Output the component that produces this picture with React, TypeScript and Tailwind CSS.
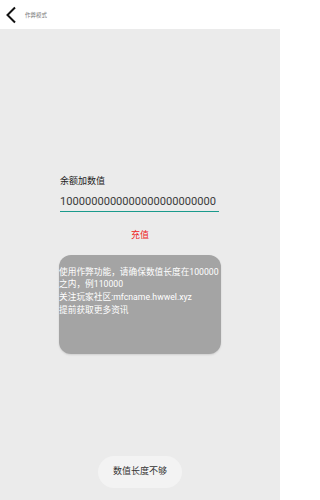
import React from "react";

export default function App() {
  return (
    <div className="w-[280px] h-[500px] bg-[#ebebeb] flex flex-col font-['Roboto','Noto_Sans_CJK_SC',sans-serif] overflow-hidden">
      <div className="h-[29px] bg-white flex items-center shrink-0">
        <svg className="ml-[5px]" width="12" height="18" viewBox="0 0 12 18">
          <path d="M10 1.5 L2.5 9 L10 16.5" fill="none" stroke="#111" strokeWidth="2" />
        </svg>
        <span className="ml-[8px] text-[5.5px] leading-[8px] text-[#777]">作弊模式</span>
      </div>
      <div className="flex flex-col items-start pl-[60px] mt-[146px]">
        <div className="text-[9px] leading-[12px] text-[#222]">余额加数值</div>
        <div className="mt-[7px] w-[159px] border-b-[1.5px] border-[#1a9a8c] text-[11.1px] leading-[15px] pb-[2px] text-[#3a3a3a] whitespace-nowrap overflow-hidden">
          1000000000000000000000000
        </div>
      </div>
      <div className="mt-[17px] text-center text-[9px] leading-[12px] text-[#ee1c1c]">充值</div>
      <div className="mt-[14px] ml-[59px] w-[162px] h-[99px] rounded-[12px] bg-[#a4a4a4] shadow-[0_1px_2px_rgba(0,0,0,0.12)] pt-[10.5px] text-white text-[8.7px] leading-[12.7px] whitespace-nowrap overflow-hidden">
        <div>使用作弊功能，请确保数值长度在100000</div>
        <div>之内，例110000</div>
        <div>关注玩家社区:mfcname.hwwel.xyz</div>
        <div>提前获取更多资讯</div>
      </div>
      <div className="mt-[102px] mx-auto w-[84px] h-[32px] rounded-full bg-[#f3f3f3] flex items-center justify-center text-[9px] text-[#333]">
        数值长度不够
      </div>
    </div>
  );
}
